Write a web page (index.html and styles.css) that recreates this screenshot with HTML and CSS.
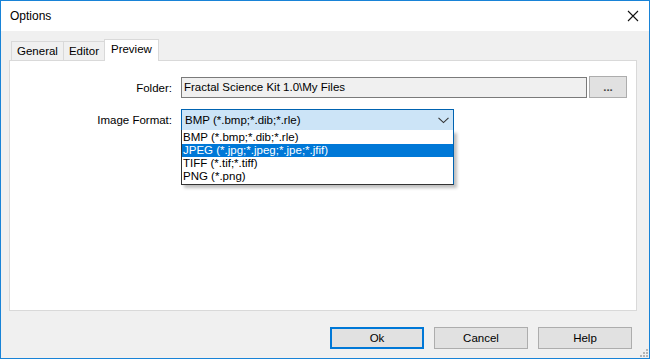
FILE: index.html
```html
<!DOCTYPE html>
<html lang="en">
<head>
  <meta charset="UTF-8" />
  <title>Options</title>
  <link rel="stylesheet" href="styles.css">
</head>
<body>

  <div class="window">
    <!-- title bar -->
    <div class="titlebar">
      <span class="title">Options</span>
      <span class="close">
        <svg width="12" height="12" viewBox="0 0 12 12">
          <path d="M1 1 L11 11 M11 1 L1 11" stroke="#111" stroke-width="1.1" fill="none" />
        </svg>
      </span>
    </div>

    <div class="content">
      <!-- tabs -->
      <div class="tabs">
        <div class="tab">General</div>
        <div class="tab">Editor</div>
        <div class="tab active">Preview</div>
      </div>

      <div class="panel">
        <div class="row">
          <label class="label">Folder:</label>
          <div class="textbox">Fractal Science Kit 1.0\My Files</div>
          <button class="btn browse">...</button>
        </div>

        <div class="row">
          <label class="label">Image Format:</label>
          <div class="combo">
            <div class="select">
              <span>BMP (*.bmp;*.dib;*.rle)</span>
              <svg width="11" height="7" viewBox="0 0 11 7">
                <path d="M0.5 0.8 L5.5 5.6 L10.5 0.8" stroke="#333" stroke-width="1.1" fill="none" />
              </svg>
            </div>
            <ul class="listbox">
              <li>BMP (*.bmp;*.dib;*.rle)</li>
              <li class="selected">JPEG (*.jpg;*.jpeg;*.jpe;*.jfif)</li>
              <li>TIFF (*.tif;*.tiff)</li>
              <li>PNG (*.png)</li>
            </ul>
          </div>
        </div>
      </div>

      <!-- bottom buttons -->
      <div class="buttons">
        <button class="btn default">Ok</button>
        <button class="btn">Cancel</button>
        <button class="btn">Help</button>
      </div>
    </div>

    <span class="grip">
      <svg width="8" height="8" viewBox="0 0 8 8">
        <rect x="6" y="0" width="2" height="2" fill="#b5b5b5" />
        <rect x="3" y="3" width="2" height="2" fill="#b5b5b5" />
        <rect x="6" y="3" width="2" height="2" fill="#b5b5b5" />
        <rect x="0" y="6" width="2" height="2" fill="#b5b5b5" />
        <rect x="3" y="6" width="2" height="2" fill="#b5b5b5" />
        <rect x="6" y="6" width="2" height="2" fill="#b5b5b5" />
      </svg>
    </span>
  </div>

</body>
</html>
```

FILE: styles.css
```css
* {
  margin: 0;
  padding: 0;
  box-sizing: border-box;
}

body {
  font-family: "Liberation Sans", Arial, sans-serif;
  font-size: 11.5px;
  color: #000;
  background-color: #fff;
}

/* window frame */
.window {
  width: 650px;
  height: 359px;
  border: 1px solid #1883d7;
  background-color: #f0f0f0;
  display: flex;
  flex-direction: column;
  position: relative;
}

.titlebar {
  height: 30px;
  background-color: #fff;
  display: flex;
  align-items: center;
  justify-content: space-between;
  padding: 0 10px 0 9px;
}

.title {
  font-size: 12px;
  color: #000;
}

.close {
  display: flex;
  align-items: center;
}

.content {
  flex: 1;
  padding: 8px 12px 0 8px;
}

/* tabs */
.tabs {
  display: flex;
  align-items: flex-end;
  padding-left: 2px;
  height: 21px;
  position: relative;
  z-index: 1;
}

.tab {
  height: 19px;
  padding: 0 5px;
  line-height: 18px;
  border: 1px solid #d9d9d9;
  border-bottom: none;
  border-right: none;
  background-color: #f0f0f0;
}

.tab.active {
  height: 22px;
  margin-bottom: -1px;
  padding: 0 6px;
  line-height: 19px;
  background-color: #fff;
  border-right: 1px solid #d9d9d9;
}

.panel {
  height: 251px;
  background-color: #fff;
  border: 1px solid #d9d9d9;
  padding-top: 16px;
}

.row {
  display: flex;
  align-items: center;
  margin-bottom: 11px;
}

.label {
  width: 162px;
  text-align: right;
  margin-right: 9px;
}

.textbox {
  width: 406px;
  height: 21px;
  border: 1px solid #7a7a7a;
  background-color: #f0f0f0;
  padding: 0 2px;
  line-height: 19px;
}

.btn {
  font-family: inherit;
  font-size: 11.5px;
  color: #000;
  background-color: #e1e1e1;
  border: 1px solid #adadad;
  height: 22px;
  width: 94px;
}

.browse {
  width: 38px;
  margin-left: 2px;
  margin-top: -1px;
  line-height: 14px;
  font-weight: bold;
  color: #444;
}

/* combo box with open list */
.combo {
  width: 273px;
  position: relative;
  height: 22px;
}

.select {
  height: 22px;
  border: 1px solid #0063b1;
  background-color: #cce4f7;
  display: flex;
  align-items: center;
  justify-content: space-between;
  padding: 0 4px 0 3px;
}

.listbox {
  position: absolute;
  top: 21px;
  left: 0;
  width: 273px;
  list-style: none;
  background-color: #fff;
  border: 1px solid #0063b1;
  border-left-color: #333;
  border-bottom-color: #333;
  border-top: none;
  padding-bottom: 1px;
  box-shadow: 3px 3px 3px rgba(0, 0, 0, 0.25);
}

.listbox li {
  height: 13px;
  line-height: 13px;
  padding-left: 1px;
}

.listbox li:first-child {
  margin-top: 1px;
}

.listbox li.selected {
  background-color: #0078d7;
  color: #fff;
}

/* dialog buttons */
.buttons {
  display: flex;
  justify-content: flex-end;
  gap: 10px;
  padding-top: 16px;
  padding-right: 5px;
}

.btn.default {
  border: 2px solid #0078d7;
}

.grip {
  position: absolute;
  right: 1px;
  bottom: 1px;
  display: flex;
}
```
